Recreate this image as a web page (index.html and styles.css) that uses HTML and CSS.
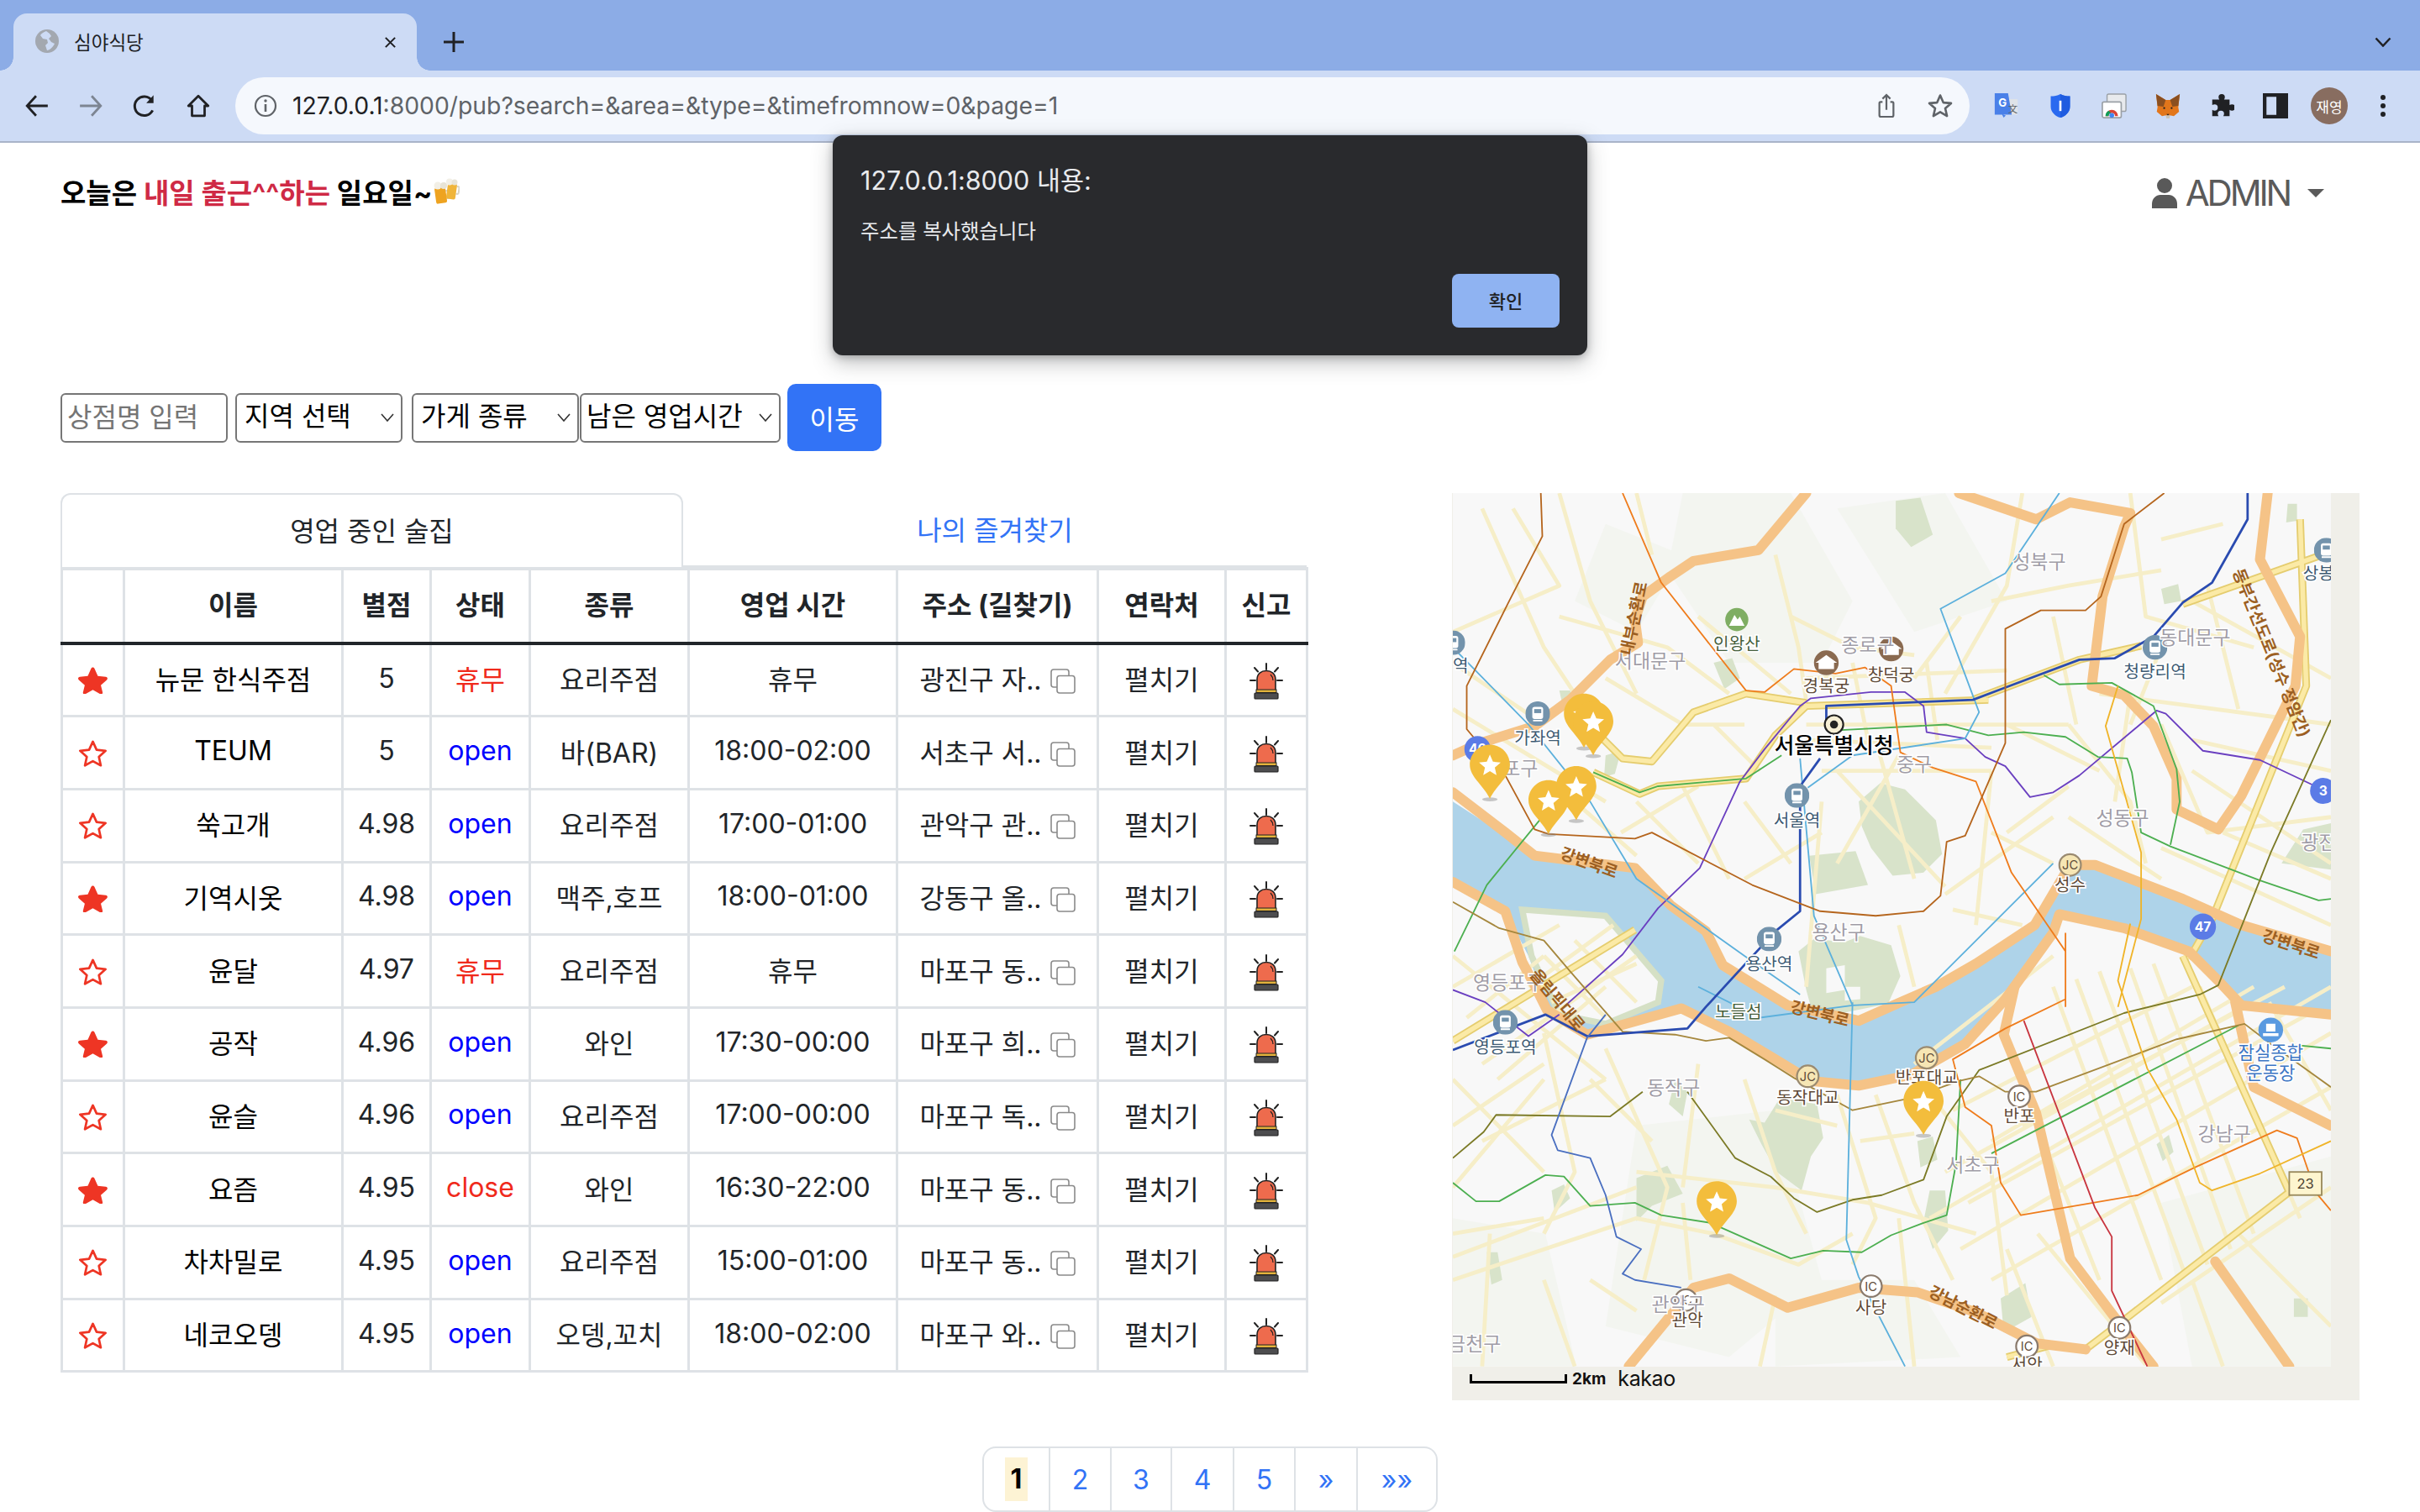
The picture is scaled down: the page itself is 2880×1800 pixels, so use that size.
FILE: index.html
```html
<!DOCTYPE html>
<html lang="ko">
<head>
<meta charset="utf-8">
<title>심야식당</title>
<link rel="stylesheet" href="styles.css">
</head>
<body>
<svg class="defs" width="0" height="0" aria-hidden="true">
  <symbol id="star-full" viewBox="0 0 36 34"><path d="M18 1.500c1 0 1.700.7 2.100 1.600l4 9.100 9.700 1c2.200.2 2.800 2.300 1.300 3.700l-7.300 6.600 2.100 8.500c.5 2-1.300 3.200-3 2.200L18 29l-9 5.200c-1.700 1-3.500-.2-3-2.200l2.100-8.500-7.300-6.600c-1.500-1.400-.9-3.500 1.300-3.700l9.700-1 4-9.100c.4-.9 1.100-1.600 2.100-1.600z" fill="#ee3524"/></symbol>
  <symbol id="star-open" viewBox="0 0 36 34"><path d="M18 3l4.600 10 11 1.200-8.200 7.400 2.300 10.600L18 26.900l-9.700 5.300 2.300-10.600-8.200-7.400 11-1.200z" fill="#fff" stroke="#ee3524" stroke-width="2.800" stroke-linejoin="round"/></symbol>
  <symbol id="copy" viewBox="0 0 30 30"><rect x="1" y="1" width="21" height="21" rx="3" fill="#fff" stroke="#8a8a8a" stroke-width="1.600"/><rect x="8" y="8.500" width="21" height="20.500" rx="3" fill="#fff" stroke="#8a8a8a" stroke-width="1.600"/></symbol>
  <symbol id="siren" viewBox="0 0 40 44">
    <g stroke="#222" stroke-width="2" stroke-linecap="round"><path d="M20 1v7M6 6l4 4.500M34 6l-4 4.500M1 21h6M33 21h6"/></g>
    <path d="M9 33V20C9 13 14 9.500 20 9.500S31 13 31 20v13z" fill="#ee6b4d" stroke="#222" stroke-width="1.600"/>
    <path d="M25 14c2 2 3 4 3 7" fill="none" stroke="#222" stroke-width="1.200"/>
    <rect x="8" y="32" width="24" height="3.500" fill="#e3b23c" stroke="#222" stroke-width="1"/>
    <rect x="6" y="36" width="28" height="7" rx="1" fill="#4d4d4f" stroke="#222" stroke-width="1.200"/>
  </symbol>
</svg>

<header class="chrome">
  <div class="tabstrip">
    <div class="tab">
      <svg class="favicon" viewBox="0 0 28 28"><circle cx="14" cy="14" r="14" fill="#a3a8b0"/><path d="M13 2c-3 1-6 3-7 5l3 4 5 1 1 4-3 3 2 6c3 0 7-4 9-8l-4-2-3-4 3-3-2-3z" fill="#cddbf5"/></svg>
      <span class="tab-title">심야식당</span>
      <svg class="tab-close" viewBox="0 0 16 16"><path d="M2 2l12 12M14 2L2 14" stroke="#202124" stroke-width="2.200"/></svg>
    </div>
    <svg class="newtab" viewBox="0 0 24 24"><path d="M12 0v24M0 12h24" stroke="#202124" stroke-width="3"/></svg>
    <svg class="strip-chevron" viewBox="0 0 20 12"><path d="M1.500 1.500L10 10.500l8.500-9" fill="none" stroke="#202124" stroke-width="2.500"/></svg>
  </div>
  <div class="toolbar">
    <div class="tool"><svg viewBox="0 0 28 28"><path d="M26 14H3M13 3L3 14l10 11" fill="none" stroke="#202124" stroke-width="2.600"/></svg></div>
    <div class="tool"><svg viewBox="0 0 28 28"><path d="M2 14h23M15 3l10 11-10 11" fill="none" stroke="#7d8592" stroke-width="2.600"/></svg></div>
    <div class="tool"><svg viewBox="0 0 28 28"><path d="M23 19a10.500 10.500 0 1 1-1-11" fill="none" stroke="#202124" stroke-width="2.800"/><path d="M24 2v9h-8z" fill="#202124"/></svg></div>
    <div class="tool"><svg viewBox="0 0 28 28"><path d="M14 3L3 14h4v11h14V14h4z" fill="none" stroke="#202124" stroke-width="2.600" stroke-linejoin="round"/></svg></div>
    <div class="omnibox">
      <svg class="info" viewBox="0 0 28 28"><circle cx="14" cy="14" r="12" fill="none" stroke="#5f6368" stroke-width="2.200"/><path d="M14 12v9" stroke="#5f6368" stroke-width="2.600"/><circle cx="14" cy="8" r="1.700" fill="#5f6368"/></svg>
      <span class="url"><span class="url-host">127.0.0.1</span>:8000/pub?search=&amp;area=&amp;type=&amp;timefromnow=0&amp;page=1</span>
      <span class="omni-gap"></span>
      <svg class="omni-icon" viewBox="0 0 28 32"><path d="M9 11H6.500A1.500 1.500 0 0 0 5 12.500V28a2 2 0 0 0 2 2h14a2 2 0 0 0 2-2V12.500a1.500 1.500 0 0 0-1.500-1.500H19M14 21V2M9 7l5-5 5 5" fill="none" stroke="#5f6368" stroke-width="2.400"/></svg>
      <svg class="omni-icon star" viewBox="0 0 30 30"><path d="M15 2.500l3.700 8.600 9.300.8-7 6.100 2.100 9.100-8.100-4.800-8.100 4.800 2.100-9.100-7-6.100 9.300-.8z" fill="none" stroke="#5f6368" stroke-width="2.600" stroke-linejoin="round"/></svg>
    </div>
    <div class="tool ext-first"><svg viewBox="0 0 34 34"><rect x="14" y="8" width="18" height="21" rx="1" fill="#dfe3e8"/><path d="M1 0h18l5 29H12l4 1-3 3-2-4H1z" fill="#4a80e8"/><text x="6" y="18" class="ext-g">G</text><text x="19" y="26" class="ext-z">文</text></svg></div>
    <div class="tool"><svg viewBox="0 0 30 34"><path d="M15 1c4 2 8 3 13 3v14c0 8-7 13-13 15C9 31 2 26 2 18V4c5 0 9-1 13-3z" fill="#2a6af0"/><path d="M15 1c4 2 8 3 13 3v14c0 8-7 13-13 15z" fill="#1f5ce0"/><rect x="13.500" y="10" width="3" height="14" fill="#fff"/></svg></div>
    <div class="tool"><svg viewBox="0 0 32 32"><rect x="7" y="1" width="24" height="22" rx="2" fill="#e8eaed" stroke="#9aa0a6" stroke-width="1.500"/><rect x="1" y="11" width="24" height="20" rx="2" fill="#fff" stroke="#9aa0a6" stroke-width="1.800"/><path d="M5 29a8 8 0 0 1 16 0h-4a4 4 0 0 0-8 0z" fill="#db4437"/><path d="M5 29a8 8 0 0 1 4-7l3 3a4 4 0 0 0-3 4z" fill="#0f9d58"/><circle cx="13" cy="28" r="3" fill="#4285f4"/></svg></div>
    <div class="tool"><svg viewBox="0 0 32 34"><path d="M0 1l13 8h6l13-8-2 18 1 6-7 6-4-1h-8l-4 1-7-6 1-6z" fill="#e2761b"/><path d="M0 1l13 8-3 9-8-1zM32 1L19 9l3 9 8-1z" fill="#8a4f20"/><path d="M13 30h6l-1 4h-4z" fill="#c9c3b8"/><path d="M14 28h4l-2 2z" fill="#222"/><circle cx="11" cy="20" r="1.300" fill="#222"/><circle cx="21" cy="20" r="1.300" fill="#222"/></svg></div>
    <div class="tool"><svg viewBox="0 0 30 32"><path d="M11 5a4 4 0 0 1 8 0c0 1-.5 2-1 3h7v7c1-.5 2-1 3-1a4 4 0 0 1 0 8c-1 0-2-.5-3-1v8h-8c.5-1 1-2 1-3a4 4 0 0 0-8 0c0 1 .5 2 1 3H3v-8c1 .5 2 1 3 1a4 4 0 0 0 0-8c-1 0-2 .5-3 1V8h9c-.5-1-1-2-1-3z" fill="#202124"/></svg></div>
    <div class="tool"><svg viewBox="0 0 28 28"><path d="M0 0h28v28H0zM4 4v20h11V4z" fill="#202124" fill-rule="evenodd"/></svg></div>
    <div class="tool"><span class="avatar">재영</span></div>
    <div class="tool"><svg class="dots" viewBox="0 0 6 26"><circle cx="3" cy="3" r="3" fill="#202124"/><circle cx="3" cy="13" r="3" fill="#202124"/><circle cx="3" cy="23" r="3" fill="#202124"/></svg></div>
  </div>
</header>

<main class="page">
  <div class="topbar">
    <h1 class="greeting">오늘은 <span class="accent">내일 출근^^하는</span> 일요일~<svg class="beer" viewBox="0 0 32 32"><g transform="rotate(-8 10 20)"><path d="M15 16h3a2 2 0 0 1 2 2v5a2 2 0 0 1-2 2h-3" fill="none" stroke="#d9d4c4" stroke-width="2"/><rect x="3" y="11" width="13" height="19" rx="2" fill="#eea320"/></g><g transform="rotate(8 22 15)"><path d="M28 9h2a2 2 0 0 1 1 2v5a2 2 0 0 1-1 2h-2" fill="none" stroke="#d9d4c4" stroke-width="2"/><rect x="17" y="6" width="11" height="19" rx="2" fill="#f0b53a"/></g><circle cx="6" cy="9" r="4.500" fill="#f2efe6"/><circle cx="13" cy="9" r="4" fill="#e8e4d6"/><circle cx="20" cy="4.500" r="4" fill="#f2efe6"/><circle cx="26" cy="5" r="3.500" fill="#e8e4d6"/></svg></h1>
    <div class="account">
      <svg class="person" viewBox="0 0 30 36"><circle cx="15" cy="9" r="9" fill="#595959"/><path d="M0 36v-5c0-7 5-11 10-11h10c5 0 10 4 10 11v5z" fill="#595959"/></svg>
      <span class="admin">ADMIN</span>
      <span class="caret"></span>
    </div>
  </div>

  <form class="search">
    <input class="field field-text" placeholder="상점명 입력">
    <select class="field field-select"><option>지역 선택</option></select>
    <select class="field field-select field-tight"><option>가게 종류</option></select>
    <select class="field field-select field-wide"><option>남은 영업시간</option></select>
    <button class="go" type="button">이동</button>
  </form>

  <div class="columns">
    <section class="listing">
      <div class="tabs">
        <a class="tabs-item is-active">영업 중인 술집</a>
        <a class="tabs-item">나의 즐겨찾기</a>
      </div>
      <table class="pubs">
        <colgroup><col class="c1"><col class="c2"><col class="c3"><col class="c4"><col class="c5"><col class="c6"><col class="c7"><col class="c8"><col class="c9"></colgroup>
        <thead><tr><th></th><th>이름</th><th>별점</th><th>상태</th><th>종류</th><th>영업 시간</th><th>주소 (길찾기)</th><th>연락처</th><th>신고</th></tr></thead>
        <tbody>
          <tr><td><svg class="fav"><use href="#star-full"/></svg></td><td class="name">뉴문 한식주점</td><td>5</td><td class="off">휴무</td><td>요리주점</td><td>휴무</td><td><span class="addr">광진구 자..<svg class="copy"><use href="#copy"/></svg></span></td><td>펼치기</td><td><svg class="siren"><use href="#siren"/></svg></td></tr>
          <tr><td><svg class="fav"><use href="#star-open"/></svg></td><td class="name">TEUM</td><td>5</td><td class="on">open</td><td>바(BAR)</td><td>18:00-02:00</td><td><span class="addr">서초구 서..<svg class="copy"><use href="#copy"/></svg></span></td><td>펼치기</td><td><svg class="siren"><use href="#siren"/></svg></td></tr>
          <tr><td><svg class="fav"><use href="#star-open"/></svg></td><td class="name">쑥고개</td><td>4.98</td><td class="on">open</td><td>요리주점</td><td>17:00-01:00</td><td><span class="addr">관악구 관..<svg class="copy"><use href="#copy"/></svg></span></td><td>펼치기</td><td><svg class="siren"><use href="#siren"/></svg></td></tr>
          <tr><td><svg class="fav"><use href="#star-full"/></svg></td><td class="name">기역시옷</td><td>4.98</td><td class="on">open</td><td>맥주,호프</td><td>18:00-01:00</td><td><span class="addr">강동구 올..<svg class="copy"><use href="#copy"/></svg></span></td><td>펼치기</td><td><svg class="siren"><use href="#siren"/></svg></td></tr>
          <tr><td><svg class="fav"><use href="#star-open"/></svg></td><td class="name">윤달</td><td>4.97</td><td class="off">휴무</td><td>요리주점</td><td>휴무</td><td><span class="addr">마포구 동..<svg class="copy"><use href="#copy"/></svg></span></td><td>펼치기</td><td><svg class="siren"><use href="#siren"/></svg></td></tr>
          <tr><td><svg class="fav"><use href="#star-full"/></svg></td><td class="name">공작</td><td>4.96</td><td class="on">open</td><td>와인</td><td>17:30-00:00</td><td><span class="addr">마포구 희..<svg class="copy"><use href="#copy"/></svg></span></td><td>펼치기</td><td><svg class="siren"><use href="#siren"/></svg></td></tr>
          <tr><td><svg class="fav"><use href="#star-open"/></svg></td><td class="name">윤슬</td><td>4.96</td><td class="on">open</td><td>요리주점</td><td>17:00-00:00</td><td><span class="addr">마포구 독..<svg class="copy"><use href="#copy"/></svg></span></td><td>펼치기</td><td><svg class="siren"><use href="#siren"/></svg></td></tr>
          <tr><td><svg class="fav"><use href="#star-full"/></svg></td><td class="name">요즘</td><td>4.95</td><td class="off">close</td><td>와인</td><td>16:30-22:00</td><td><span class="addr">마포구 동..<svg class="copy"><use href="#copy"/></svg></span></td><td>펼치기</td><td><svg class="siren"><use href="#siren"/></svg></td></tr>
          <tr><td><svg class="fav"><use href="#star-open"/></svg></td><td class="name">차차밀로</td><td>4.95</td><td class="on">open</td><td>요리주점</td><td>15:00-01:00</td><td><span class="addr">마포구 동..<svg class="copy"><use href="#copy"/></svg></span></td><td>펼치기</td><td><svg class="siren"><use href="#siren"/></svg></td></tr>
          <tr><td><svg class="fav"><use href="#star-open"/></svg></td><td class="name">네코오뎅</td><td>4.95</td><td class="on">open</td><td>오뎅,꼬치</td><td>18:00-02:00</td><td><span class="addr">마포구 와..<svg class="copy"><use href="#copy"/></svg></span></td><td>펼치기</td><td><svg class="siren"><use href="#siren"/></svg></td></tr>
        </tbody>
      </table>
    </section>

    <aside class="map">
      <svg class="map-tile" viewBox="941 320 569 566.200" preserveAspectRatio="none">
        <defs>
          <symbol id="pin" viewBox="0 0 26 37" overflow="visible"><ellipse cx="13" cy="35.500" rx="5" ry="1.300" fill="#888" opacity=".45"/><path d="M13 0C5.800 0 0 5.800 0 13c0 8 8.500 13 13 22 4.500-9 13-14 13-22C26 5.800 20.200 0 13 0z" fill="#f3bd3c"/><path d="M13 6.500l2 4.600 5 .5-3.800 3.300 1.100 4.900-4.300-2.600-4.300 2.600 1.100-4.900L6 11.600l5-.5z" fill="#fff"/></symbol>
          <symbol id="stn" viewBox="0 0 16 16"><circle cx="8" cy="8" r="8" fill="#7393ac"/><rect x="4.500" y="3.500" width="7" height="8" rx="1.500" fill="#fff"/><rect x="5.700" y="5" width="4.600" height="2.600" fill="#7393ac"/><path d="M5 12.500h6" stroke="#fff"/></symbol>
        </defs>
        <rect x="941" y="320" width="569" height="567" fill="#f8f8f8"/>
        <!-- hills -->
        <g fill="#f3f5f0">
          <path d="M1090 320l70 0 40 70-20 40-60 0-40-60z"/><path d="M1190 330l70-10 40 70-60 20z"/><path d="M1040 340l50 20-30 50-40-20z"/>
          <path d="M1060 730l90-10 30 110-60 50-80-20zM1150 830l90 0 30 50-120 6zM941 790l60 10 20 86-80 0z"/>
          <path d="M1400 780l110-30 0 136-90 0z"/>
        </g>
        <g fill="#d8e3ca">
          <path d="M1204 520l14-12 16 4 20 20 4 22-12 12-20 2-14-18-6-14z"/>
          <path d="M1172 555l30-3 8 22-34 6z"/>
          <path d="M1170 642l-5-25 10-8 20 2 10-4 20 6 6 20-8 18-40 8-10-6z"/>
          <path d="M1228 325l16-2 8 24-14 8-10-12z"/><path d="M1110 430l12-3 5 13-10 7z"/><path d="M1010 448l7 0 2 7-7 2zM1040 490l10-3-4 15-7 2z"/>
          <path d="M1133 726l10 2 10-16 24 4 4 22-8 12-6 22-16-12-10-18z"/><path d="M1060 764l20-8 10 18-20 8-10 10zM1085 700l8 8-3 16-9-8z"/>
          <path d="M1250 772l10 0 2 26-10 12-6-18zM1242 740l10-3 3 15-11 5z"/><path d="M1296 842l16-10 4 22-18 10z"/>
          <path d="M1478 560l14-22 18-4 0 30zM1397 742l8-6 3 11-7 6zM1486 842l9 0 0 12-9 0z"/>
          <path d="M1400 382l11-3 2 11-11 2zM1482 327l6 0 0 11-7 1zM1005 772l8-4 4 9-10 9zM963 812l7 0 3 18-7 3z"/>
        </g>
        <path d="M1183 628l12-2 0 16-12 2zM1195 640l10 0 0 8-10 1z" fill="#f8f8f8"/>
        <!-- river -->
        <path d="M941 520L975 542 994 557 1059 565 1082 589 1105 606 1114 628 1158 654 1204 664 1231 652 1254 642 1280 627 1318 600 1341 563 1357 563 1414 585 1452 602 1510 619V656L1452 650 1437 634 1414 613 1376 600 1334 591 1330 603 1299 646 1273 675 1238 695 1204 702 1173 699 1150 685 1120 667 1089 652 1040 665 1028 669 1005 660 990 620 975 591 941 572z" fill="#aed3e9"/>
        <path d="M986 590L1040 594 1076 636 1074 650 1040 664 1010 658 992 620z" fill="#f8f8f8" stroke="#d5e0c5" stroke-width="4"/>
        <!-- minor roads -->
        <g fill="none" stroke="#f6eec8" stroke-width="2.600" stroke-linejoin="round">
          <path d="M1010 320L1030 390 1060 450M960 330L1000 420 1040 480M1100 400L1160 450M1150 360L1165 420 1170 455M1270 400L1240 440M1260 450L1300 380 1310 320M1380 320L1390 400 1460 420M1360 450L1510 470M1420 390L1510 440M1060 320L1070 360M941 430L1000 470M941 460L1040 520M1010 400L1080 420 1120 450M980 330L1010 380 941 410M1040 440L1090 470 1130 470M1110 470L1140 500M1160 400L1200 420 1240 425M1290 390L1340 380 1400 370M1330 400L1345 470M1400 350L1440 340M1430 380L1450 460M1380 470L1400 420"/>
          <path d="M1170 470L1340 470M1190 500L1260 575M1230 490L1190 560M1215 480L1240 570M1290 500L1280 600M1170 440L1300 435M1200 430L1210 480M1248 430L1255 480M1300 470L1360 500M1340 470L1380 520 1390 560M1400 470L1430 540 1510 530M1420 500L1510 560M1380 450L1370 520M1130 520L1160 560M1100 510L1050 540M1180 520L1170 640M1130 570L1180 540M1300 540L1340 510M1260 580L1330 530M1170 480L1290 485M1180 500L1290 500M1060 520L1100 560M1020 520L1060 555M1090 510L1120 570M1290 540L1330 560M1340 530L1400 570M1400 550L1510 600M1440 540L1510 570M1420 480L1510 500M1265 590L1310 600M1230 600L1240 640"/>
          <path d="M941 620L1040 700M941 640L1010 600M950 660L1000 620M960 690L1060 620M970 700L1040 640M941 700L1000 760M941 770L1000 700M1000 670L1020 760 1000 800M1040 680L1080 770 1065 830M1100 690L1090 770M1060 760L1150 770 1210 780 1280 800M941 815L1060 770M941 830L1060 790 1110 800 1165 820 1200 800M1130 700L1150 760 1170 800M1190 710L1215 790 1200 820M1215 710L1240 780 1265 830M1250 710L1290 760 1300 840M941 730L1000 690M960 740L1040 700M1030 700L1070 740M1000 620L1040 660M1020 610L1060 650M1045 600L990 640M1060 625L1005 650M1150 720L1190 730M1205 740L1240 735"/>
          <path d="M1250 790L1510 640M1270 810L1510 670M1290 830L1510 705M1260 760L1450 655M1330 640L1400 830M1360 630L1430 820M1300 680L1360 830M1395 625L1460 800M1425 640L1490 790M1470 650L1510 720M1265 720L1420 640M1290 740L1460 640M1330 620L1240 690M1320 800L1390 885M1420 830L1440 886M1230 790L1240 886M1300 810L1330 886M1400 845L1510 770M1450 800L1510 860M1310 730L1480 640M1345 635L1415 825M1380 628L1445 810M1275 780L1500 655"/>
          <path d="M960 886L965 800M1000 830L1020 886M1090 780L1095 830M1150 840L1140 886M941 800L1000 790M1030 830L1060 850"/>
        </g>
        <!-- highways -->
        <g fill="none" stroke-linejoin="round">
          <g stroke="#e5cd6f" stroke-width="5">
            <path d="M1288 454L1170 458 1150 477 1131 505 1074 510 1062 515 1032 501M1170 456L1131 450 1097 462 1070 494 1051 492 1028 469M1278 454L1347 428 1387 419M1510 358L1414 392M1490 337L1494 445 1433 596 1418 622M1414 620L1483 773 1372 859 1351 875M941 675L1059 603M1300 880L1330 872"/>
          </g>
          <g stroke="#fbeaa6" stroke-width="3">
            <path d="M1288 454L1170 458 1150 477 1131 505 1074 510 1062 515 1032 501M1170 456L1131 450 1097 462 1070 494 1051 492 1028 469M1278 454L1347 428 1387 419M1510 358L1414 392M1490 337L1494 445 1433 596 1418 622M1414 620L1483 773 1372 859 1351 875M941 675L1059 603M1300 880L1330 872"/>
          </g>
          <g stroke="#f5c387" stroke-width="6.500" stroke-linecap="round">
            <path d="M1170 320L1139 357 1097 364 1082 374 1064 387 1059 402 1061 417 1043 428 1017 454 994 471 959 482 941 490"/>
            <path d="M1269 320L1319 337 1341 326 1380 333 1376 342 1362 387 1355 445 1376 451 1395 471 1410 505 1410 525 1437 538 1452 516 1487 445 1490 413 1464 363 1469 320"/>
            <path d="M941 514L975 540 994 555 1059 563 1082 587 1105 604 1116 626 1158 652 1204 662 1231 650 1254 640 1280 625 1318 600 1341 561 1357 561 1414 583 1452 600 1510 617"/>
            <path d="M941 572L975 591 986 624 994 639 1002 655 1028 671 1089 654 1120 669 1150 687 1173 701 1204 704 1238 697 1273 677 1299 648 1330 605 1334 593 1376 602 1418 617 1437 636 1452 652 1510 658"/>
            <path d="M1055 886L1097 835 1120 829 1158 848 1204 835 1242 838 1280 851 1319 871 1351 875"/>
            <path d="M1305 640L1298 671 1319 722 1341 816 1372 857 1395 886"/>
            <path d="M1435 818L1483 886M1448 650L1460 705 1510 730"/>
          </g>
        </g>
        <!-- subway lines -->
        <g fill="none" stroke-width="1" stroke-linejoin="round">
          <path stroke="#6a3fc0" d="M1013 653L1051 619 1074 589 1101 563 1127 507 1143 486 1166 458 1173 453 1212 449 1234 449 1246 458 1248 475 1273 479 1286 491 1299 497 1315 517 1330 514 1347 503 1397 461 1403 463 1427 487 1464 493 1500 510M941 642L962 650 990 672 1010 658"/>
          <path stroke="#4caf50" d="M1185 474L1261 470 1288 477 1311 475 1338 478 1359 491 1378 492 1381 501 1387 540 1406 549 1464 571 1502 584 1510 583M1154 490L1131 505 1074 510 1062 514 1032 501M998 531L963 574 942 617M1324 438L1334 444 1368 443 1395 458 1410 499 1412 520 1406 548M941 767L956 779 971 779 1001 762 1013 763 1030 782 1059 780 1076 788 1108 793 1160 816 1181 811 1206 812 1225 801 1246 793 1261 788 1267 755 1270 700M1290 748L1450 665M1490 678L1510 680"/>
          <path stroke="#7b7a26" d="M941 751L961 734 969 723 1043 724 1064 708M1093 708L1124 751 1147 763 1162 777 1177 786 1200 778 1219 775 1246 765 1261 724 1282 694 1376 657 1425 645 1437 639 1471 553 1510 467"/>
          <path stroke="#a5873d" d="M941 585L971 602 1000 610 1017 630 1051 669 1085 671 1105 675 1120 673 1143 687 1162 699 1200 720 1238 712 1269 701 1282 698 1299 708 1319 708 1410 674 1454 664 1471 677 1510 705"/>
          <path stroke="#5cb0dc" d="M1200 650L1196 804 1204 828 1234 886M1166 492L1175 594 1200 652M1171 511L1200 490 1273 479 1282 462 1257 395 1299 372 1334 320M941 420L990 470 1030 520 1060 570 1130 620 1166 645M1100 640L1140 660 1200 652 1240 650 1290 600 1330 560"/>
          <path stroke="#ef7c1c" d="M1338 653L1338 617 1303 566 1280 507 1252 498 1231 488 1225 445 1208 433 1189 437 1162 434 1143 449 1131 448 1076 378 1051 320M1338 605L1338 648 1299 667 1265 687 1273 718 1290 730 1296 767 1309 788 1385 775 1422 757 1475 733 1488 738 1500 773 1510 785"/>
          <path stroke="#2a4bb0" stroke-width="1.500" d="M1456 320L1456 337 1433 378 1414 391 1395 413 1370 427 1347 428 1299 446 1278 454 1183 458 1183 467M1179 492L1166 510 1166 591 1150 604 1105 653 1093 667 1028 672 1001 658 941 681"/>
          <path stroke="#b5651d" d="M998 320L999 348 977 391 950 445 950 473 975 503 994 538 1003 541 1059 544 1070 540 1135 574 1179 591 1215 594 1246 591 1257 581 1261 546 1273 542 1299 482 1299 408 1322 396 1351 396 1361 387 1376 340 1402 320"/>
          <path stroke="#f0b429" d="M1380 599L1372 636 1391 693 1410 726 1425 767 1433 772 1464 761 1510 740M1372 445L1364 471 1387 553 1387 596 1372 653"/>
          <path stroke="#c8353f" d="M1311 662L1357 783 1368 802 1368 837 1391 886"/>
          <path stroke="#4a6fc0" d="M1040 658L1028 673 1005 736 1009 746 1030 751 1040 775 1047 802 1063 810 1051 826 1059 830 1089 835"/>
        </g>
        <!-- POI markers -->
        <g fill="#8a6a50">
          <circle cx="1183" cy="430" r="8"/><circle cx="1225" cy="421" r="8"/>
        </g>
        <path d="M1178 434h10v-4h-10zM1176 430l7-5 7 5zM1220 425h10v-4h-10zM1218 421l7-5 7 5z" fill="#fff"/>
        <circle cx="1125" cy="402" r="7.500" fill="#7fae63"/><path d="M1120 406l3.500-7 2 3 1.500-2 3 6z" fill="#fff"/>
        <circle cx="1471" cy="668" r="8" fill="#5a9ae0"/><path d="M1466 670h10v2h-10zM1468 664h6v5h-6z" fill="#fff"/>
        <circle cx="1188" cy="470" r="6" fill="#f6efd5" stroke="#222" stroke-width="1.200"/><circle cx="1188" cy="470" r="2.600" fill="#222"/>
        <!-- stations -->
        <use href="#stn" x="988" y="455" width="16" height="16"/><use href="#stn" x="1156" y="508" width="16" height="16"/><use href="#stn" x="1388" y="412" width="16" height="16"/><use href="#stn" x="1138" y="601" width="16" height="16"/><use href="#stn" x="967" y="655" width="16" height="16"/><use href="#stn" x="1499" y="349" width="16" height="16"/><use href="#stn" x="933" y="409" width="16" height="16"/>
        <!-- interchanges -->
        <g class="ic-j"><circle cx="1341" cy="561" r="7"/><circle cx="1171" cy="698" r="7"/><circle cx="1248" cy="686" r="7"/></g>
        <g class="ic-i"><circle cx="1308" cy="711" r="7"/><circle cx="1212" cy="834" r="7"/><circle cx="1092" cy="843" r="7"/><circle cx="1313" cy="873" r="7"/><circle cx="1373" cy="861" r="7"/></g>
        <g class="ic-t">
          <text x="1341" y="564">JC</text><text x="1171" y="701">JC</text><text x="1248" y="689">JC</text>
          <text x="1308" y="714">IC</text><text x="1212" y="837">IC</text><text x="1092" y="846">IC</text><text x="1313" y="876">IC</text><text x="1373" y="864">IC</text>
        </g>
        <!-- badges -->
        <g fill="#5b7be6"><circle cx="957" cy="486" r="8.500"/><circle cx="1505" cy="513" r="8.500"/><circle cx="1427" cy="601" r="8.500"/></g>
        <g class="badge"><text x="957" y="489">46</text><text x="1505" y="516">3</text><text x="1427" y="604">47</text></g>
        <rect x="1483" y="760" width="21" height="15" fill="#fdf5cf" stroke="#9a8a5c"/><text x="1493.500" y="771" class="road-no">23</text>
        <!-- labels -->
        <g class="lb-d">
          <text x="1321" y="369">성북구</text><text x="1069" y="433">서대문구</text><text x="1210" y="423">종로구</text><text x="1422" y="418">동대문구</text><text x="1240" y="500">중구</text><text x="1375" y="535">성동구</text><text x="1502" y="551">광진</text><text x="1191" y="609">용산구</text><text x="977" y="642">영등포구</text><text x="1084" y="710">동작구</text><text x="1278" y="760">서초구</text><text x="1441" y="740">강남구</text><text x="1087" y="850">관악구</text><text x="955" y="876">금천구</text><text x="979" y="503">마포구</text>
        </g>
        <g class="lb-s">
          <text x="996" y="483">가좌역</text><text x="1164" y="536">서울역</text><text x="1396" y="440">청량리역</text><text x="1146" y="629">용산역</text><text x="975" y="683">영등포역</text><text x="1502" y="376">상봉</text><text x="946" y="436">역</text>
        </g>
        <g class="lb-p">
          <text x="1125" y="422">인왕산</text><text x="1126" y="660">노들섬</text>
        </g>
        <g class="lb-h">
          <text x="1183" y="449">경복궁</text><text x="1225" y="442">창덕궁</text><text x="1171" y="716">동작대교</text><text x="1248" y="703">반포대교</text><text x="1308" y="728">반포</text><text x="1341" y="578">성수</text><text x="1212" y="852">사당</text><text x="1093" y="860">관악</text><text x="1373" y="878">양재</text><text x="1313" y="889">서안</text>
        </g>
        <g class="lb-b"><text x="1471" y="687">잠실종합</text><text x="1471" y="700">운동장</text></g>
        <text x="1188" y="489" class="lb-city">서울특별시청</text>
        <g class="lb-r">
          <text transform="translate(1028 563) rotate(20)">강변북로</text>
          <text transform="translate(1178 661) rotate(14)">강변북로</text>
          <text transform="translate(1483 616) rotate(18)">강변북로</text>
          <text transform="translate(1062 402) rotate(-78)">내부순환로</text>
          <text transform="translate(1270 851) rotate(27)">강남순환로</text>
          <text transform="translate(1468 425) rotate(68)">동부간선도로(성수 정암간)</text>
          <text transform="translate(1006 651) rotate(50)">올림픽대로</text>
        </g>
        <!-- result pins -->
        <use href="#pin" x="952" y="483" width="26" height="37"/>
        <use href="#pin" x="1013" y="450" width="26" height="37"/>
        <use href="#pin" x="1019" y="455" width="26" height="37"/>
        <use href="#pin" x="990" y="506" width="26" height="37"/>
        <use href="#pin" x="1008" y="497" width="26" height="37"/>
        <use href="#pin" x="1233" y="701" width="26" height="37"/>
        <use href="#pin" x="1099" y="766" width="26" height="37"/>
      </svg>
      <div class="map-foot">
        <span class="scale"></span><span class="scale-txt">2km</span><span class="kakao">kakao</span>
      </div>
    </aside>
  </div>

  <nav class="pager">
    <a class="pg pg-1"><span class="pg-now">1</span></a><a class="pg pg-2">2</a><a class="pg pg-3">3</a><a class="pg pg-4">4</a><a class="pg pg-5">5</a><a class="pg pg-6">»</a><a class="pg pg-7">»»</a>
  </nav>
</main>

<div class="dialog" role="alertdialog">
  <div class="dialog-title">127.0.0.1:8000 내용:</div>
  <div class="dialog-msg">주소를 복사했습니다</div>
  <div class="dialog-foot"><button class="dialog-ok" type="button">확인</button></div>
</div>
</body>
</html>
```

FILE: styles.css
```css
* { box-sizing: border-box; }
html, body { margin: 0; height: 1800px; overflow: hidden; background: #fff; }
body { position: relative; font-family: Inter, "Noto Sans CJK KR", sans-serif; color: #212529; }
.defs { position: absolute; }

/* browser chrome */
.chrome { height: 170px; background: #cddbf5; border-bottom: 2px solid #a9b4c9; }
.tabstrip { height: 84px; background: #8cace6; padding: 16px 0 0 16px; display: flex; align-items: flex-start; }
.tab { position: relative; width: 480px; height: 68px; background: #cddbf5; border-radius: 16px 16px 0 0; display: flex; align-items: center; padding: 0 24px 2px 26px; }
.tab::before, .tab::after { content: ""; position: absolute; bottom: 0; width: 16px; height: 16px; }
.tab::before { left: -16px; background: radial-gradient(circle at 0 0, transparent 15.500px, #cddbf5 16px); }
.tab::after { right: -16px; background: radial-gradient(circle at 100% 0, transparent 15.500px, #cddbf5 16px); }
.favicon { width: 28px; height: 28px; flex: none; }
.tab-title { margin-left: 18px; font-size: 22.500px; color: #202124; flex: 1; }
.tab-close { width: 15px; height: 15px; flex: none; margin-top: 2px; }
.newtab { width: 24px; height: 24px; margin: 22px 0 0 32px; flex: none; }
.strip-chevron { width: 20px; height: 12px; margin: 28px 34px 0 auto; flex: none; }
.toolbar { height: 84px; display: flex; align-items: center; padding: 0 12px; }
.tool { width: 64px; height: 64px; flex: none; display: flex; align-items: center; justify-content: center; }
.tool svg { width: 30px; height: 30px; }
.tool svg.dots { width: 6px; height: 26px; }
.ext-first { margin-left: 12px; }
.ext-g { font: 700 15px Inter, sans-serif; fill: #fff; }
.ext-z { font: 400 13px "Noto Sans CJK SC", sans-serif; fill: #5f6368; }
.avatar { width: 44px; height: 44px; border-radius: 50%; background: #886d60; color: #fff; font-size: 17px; display: flex; align-items: center; justify-content: center; }
.omnibox { width: 2064px; height: 68px; margin-left: 12px; flex: none; border-radius: 34px; background: #f5f8fd; display: flex; align-items: center; padding: 0 20px 0 22px; }
.info { width: 28px; height: 28px; flex: none; }
.url { margin-left: 18px; font-size: 28.300px; color: #5f6368; white-space: nowrap; }
.url-host { color: #202124; }
.omni-gap { flex: 1; }
.omni-icon { width: 26px; height: 30px; flex: none; }
.omni-icon.star { width: 30px; height: 30px; margin-left: 36px; }

/* page */
.page { padding: 0 72px; }
.topbar { height: 287px; display: flex; justify-content: space-between; align-items: flex-start; }
.greeting { margin: 42px 0 0; font-size: 33px; line-height: 36px; font-weight: 700; color: #000; display: flex; white-space: pre; }
.accent { color: #cf2a45; }
.beer { width: 32px; height: 32px; margin: 0 0 0 1px; }
.account { display: flex; align-items: center; margin: 40px 42px 0 0; color: #5a5a5a; }
.person { width: 30px; height: 36px; }
.admin { margin-left: 10px; font-size: 42px; line-height: 40px; letter-spacing: -3.200px; font-weight: 400; }
.caret { margin-left: 21px; width: 0; height: 0; border-left: 10px solid transparent; border-right: 10px solid transparent; border-top: 10px solid #5a5a5a; }

.search { display: flex; align-items: center; height: 80px; margin-bottom: 50px; }
.field { height: 59px; font: 32px/40px Inter, "Noto Sans CJK KR", sans-serif; border: 2px solid #767676; border-radius: 6px; background: #fff; color: #000; padding: 0 0 2px 6px; }
.field-text { width: 199px; margin-right: 9px; }
.field-text::placeholder { color: #757575; opacity: 1; }
.field-select { width: 199px; margin-right: 11px; appearance: none; padding-left: 9px; background-image: url("data:image/svg+xml,%3Csvg xmlns='http://www.w3.org/2000/svg' width='16' height='10'%3E%3Cpath d='M1 1l7 8 7-8' fill='none' stroke='%23333' stroke-width='1.600'/%3E%3C/svg%3E"); background-repeat: no-repeat; background-position: right 8px center; }
.field-tight { margin-right: 1px; }
.field-wide { width: 239px; margin-right: 8px; padding-left: 6px; }
.go { width: 112px; height: 80px; border: 0; border-radius: 10px; background: #3273f6; color: #fff; font: 32px Inter, "Noto Sans CJK KR", sans-serif; padding-bottom: 2px; }

.columns { display: flex; justify-content: space-between; width: 2736px; height: 1080px; align-items: flex-start; }
.listing { width: 1483px; }
.tabs { display: flex; height: 88px; }
.tabs-item { flex: 1; display: flex; align-items: center; justify-content: center; font-size: 32px; color: #3273f6; border-bottom: 2px solid #dee2e6; padding-bottom: 2px; }
.tabs-item.is-active { flex: none; width: 741px; color: #212529; border: 2px solid #dee2e6; border-bottom: 0; border-radius: 12px 12px 0 0; background: #fff; padding-bottom: 4px; }
.pubs { width: 1482px; border-collapse: collapse; table-layout: fixed; font-size: 32px; }
.c1 { width: 74px; } .c2 { width: 260px; } .c3 { width: 105px; } .c4 { width: 118px; } .c5 { width: 189px; } .c6 { width: 248px; } .c7 { width: 239px; } .c8 { width: 152px; } .c9 { width: 97px; }
.pubs th, .pubs td { border: 3px solid #dee2e6; padding: 0; text-align: center; vertical-align: middle; white-space: nowrap; }
.pubs th { height: 89px; font-weight: 700; border-bottom: 4px solid #212529; border-top-width: 4px; padding-bottom: 7px; }
.pubs td { height: 86.700px; padding-bottom: 5px; }
.name { color: #000; }
.off { color: #f02a1c; }
.on { color: #0000ff; }
.fav { width: 35px; height: 33px; display: block; margin: 5px auto 0; }
.addr { display: inline-flex; align-items: center; }
.copy { width: 30px; height: 30px; margin: 8px 0 0 10px; flex: none; }
.siren { width: 40px; height: 44px; display: block; margin: 8px auto 0; }

.map { position: relative; width: 1080px; height: 1080px; background: #f0efe9; padding-left: 1px; }
.map-tile { display: block; width: 1045px; height: 1040px; }
.map-foot { display: flex; align-items: center; height: 28px; padding-left: 20px; }
.scale { width: 116px; height: 11px; border: 3px solid #000; border-top: 0; }
.scale-txt { margin-left: 6px; font-size: 19px; font-weight: 700; color: #111; }
.kakao { margin-left: 14px; font-size: 25px; color: #111; letter-spacing: -.4px; }

.map-tile text { font-family: Inter, "Noto Sans CJK KR", sans-serif; text-anchor: middle; }
.lb-d text { font-size: 12.500px; fill: #a09ca6; paint-order: stroke; stroke: #fff; stroke-width: 1.500px; }
.lb-s text { font-size: 11px; fill: #3d5a73; paint-order: stroke; stroke: #fff; stroke-width: 1.800px; }
.lb-p text { font-size: 11px; fill: #45603c; paint-order: stroke; stroke: #fff; stroke-width: 1.800px; }
.lb-h text { font-size: 11px; fill: #5e4a38; paint-order: stroke; stroke: #fff; stroke-width: 1.800px; }
.lb-b text { font-size: 11.500px; fill: #3d76c4; paint-order: stroke; stroke: #fff; stroke-width: 1.800px; }
.lb-r text { font-size: 10.500px; font-weight: 700; fill: #9c5f22; }
.lb-city { font-size: 14px; font-weight: 500; fill: #000; paint-order: stroke; stroke: #fff; stroke-width: 2px; }
.ic-j circle { fill: #f6e6b4; stroke: #9a8a70; stroke-width: 1.200px; }
.ic-i circle { fill: #fff; stroke: #8a7a6c; stroke-width: 1.200px; }
.ic-t text { font-size: 8px; fill: #5e4a38; }
.badge text { font-size: 8.500px; font-weight: 700; fill: #fff; }
.road-no { font-size: 9px; fill: #4a4030; }

.pager { display: flex; justify-content: center; margin-top: 55px; }
.pg { display: flex; align-items: center; justify-content: center; height: 78px; border: 2.500px solid #dee2e6; border-left: 0; color: #3273f6; font-size: 32px; }
.pg-1 { width: 81px; border-left: 2.500px solid #dee2e6; border-radius: 16px 0 0 16px; }
.pg-2 { width: 73px; } .pg-3 { width: 72px; } .pg-4 { width: 74px; } .pg-5 { width: 73px; } .pg-6 { width: 74px; }
.pg-7 { width: 95px; border-radius: 0 16px 16px 0; }
.pg-now { background: #fdf3d4; color: #000; font-weight: 700; padding: 7px 7px; line-height: 38px; }

/* dialog */
.dialog { position: absolute; left: 991px; top: 161px; width: 898px; height: 262px; background: #292a2d; border-radius: 12px; box-shadow: 0 8px 24px rgba(60,64,67,.35), 0 2px 8px rgba(60,64,67,.3); padding: 36px 33px 33px; display: flex; flex-direction: column; }
.dialog-title { font-size: 30.500px; line-height: 36px; color: #e8eaed; }
.dialog-msg { font-size: 24.400px; line-height: 30px; margin-top: 27px; color: #e8eaed; }
.dialog-foot { margin-top: auto; display: flex; justify-content: flex-end; }
.dialog-ok { width: 128px; height: 64px; border: 0; border-radius: 8px; background: #8fb3f2; color: #202124; font: 500 22px Inter, "Noto Sans CJK KR", sans-serif; padding-bottom: 4px; }
```
